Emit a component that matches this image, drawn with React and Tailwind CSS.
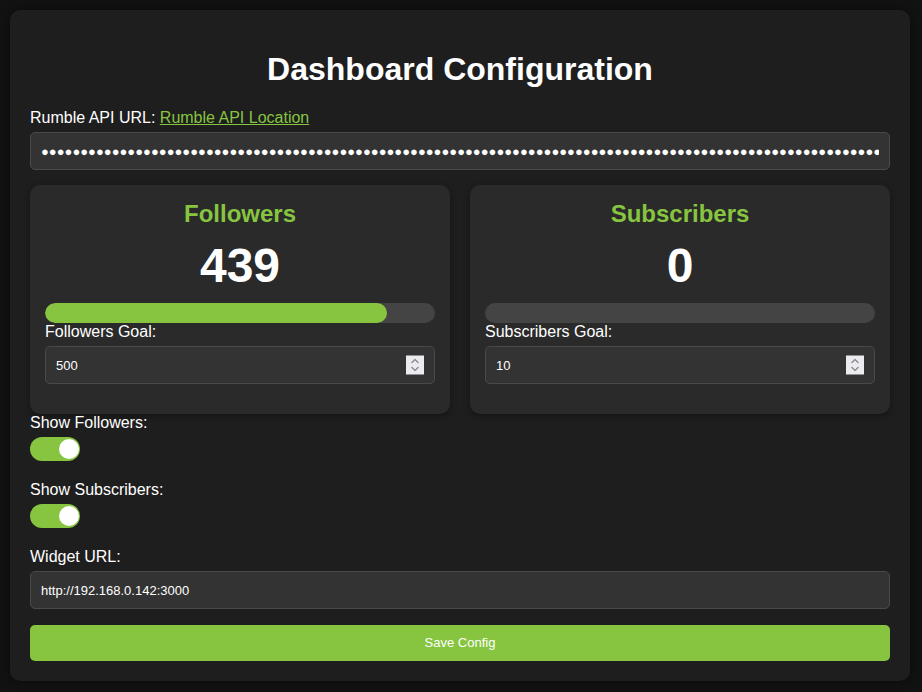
import { useState } from 'react';

const Spinner = () => (
    <div className="pointer-events-none absolute right-[11px] top-1/2 -translate-y-1/2 w-[18px] h-[19px] bg-[#ebebf0] flex flex-col items-center justify-center gap-[3px]">
        <svg width="10" height="5" viewBox="0 0 10 5" fill="none" stroke="#8a8a8f" strokeWidth="1.3">
            <path d="M1.5 4.5 L5 1 L8.5 4.5" />
        </svg>
        <svg width="10" height="5" viewBox="0 0 10 5" fill="none" stroke="#8a8a8f" strokeWidth="1.3">
            <path d="M1.5 0.5 L5 4 L8.5 0.5" />
        </svg>
    </div>
);

const StatCard = ({ title, count, goal, onGoal }) => {
    const pct = goal > 0 ? Math.min(100, (count / goal) * 100) : 0;
    return (
        <div className="bg-[#2a2a2a] rounded-[10px] p-[15px] shadow-[0_2px_6px_rgba(0,0,0,0.35)]">
            <h2 className="text-center text-[24px] leading-[28px] font-bold text-[#87c540] mb-[10px]">{title}</h2>
            <div className="text-center text-[48px] leading-[55px] font-bold text-white my-[10px]">{count}</div>
            <div className="h-[20px] w-full rounded-[10px] bg-[#444] overflow-hidden">
                <div className="h-full rounded-[10px] bg-[#87c540]" style={{ width: `${pct}%` }} />
            </div>
            <label className="block text-[16px] leading-[18px] text-white mb-[5px]">{title} Goal:</label>
            <div className="relative mb-[15px]">
                <input
                    type="number"
                    value={goal}
                    onChange={(e) => onGoal(Number(e.target.value))}
                    className="block w-full h-[38px] px-[10px] text-[13px] text-white bg-[#333] border border-[#4a4a4a] rounded-[5px] outline-none [appearance:textfield] [&::-webkit-inner-spin-button]:appearance-none"
                />
                <Spinner />
            </div>
        </div>
    );
};

const Toggle = ({ on, onClick }) => (
    <button
        onClick={onClick}
        className={`flex items-center w-[50px] h-[24px] rounded-full px-[1px] ${on ? 'justify-end bg-[#87c540]' : 'justify-start bg-[#555]'}`}
    >
        <span className="block w-[20px] h-[20px] rounded-full bg-white" />
    </button>
);

export default function App() {
    const [followersGoal, setFollowersGoal] = useState(500);
    const [subsGoal, setSubsGoal] = useState(10);
    const [showFollowers, setShowFollowers] = useState(true);
    const [showSubs, setShowSubs] = useState(true);

    return (
        <div className="min-h-screen bg-[#121212] p-[10px] font-['Liberation_Sans',Arial,sans-serif]">
            <div className="w-[900px] bg-[#1e1e1e] rounded-[10px] px-[20px] pt-[20px] pb-[20px] shadow-[0_0_10px_rgba(0,0,0,0.5)]">
                <h1 className="text-center text-[32px] leading-[37px] font-bold text-white mt-[21px] mb-[21px]">Dashboard Configuration</h1>

                <label className="block text-[16px] leading-[18px] text-white mb-[5px]">
                    Rumble API URL: <a href="#" className="text-[#87c540] underline">Rumble API Location</a>
                </label>
                {/* masked api key, drawn with the same circles the browser uses */}
                <input
                    type="text"
                    readOnly
                    value={'●'.repeat(140)}
                    className="block w-full h-[38px] px-[10px] mb-[15px] text-[13px] text-white bg-[#333] border border-[#4a4a4a] rounded-[5px] outline-none"
                />

                <div className="grid grid-cols-2 gap-[20px]">
                    <StatCard title="Followers" count={439} goal={followersGoal} onGoal={setFollowersGoal} />
                    <StatCard title="Subscribers" count={0} goal={subsGoal} onGoal={setSubsGoal} />
                </div>

                <label className="block text-[16px] leading-[18px] text-white mb-[5px]">Show Followers:</label>
                <div className="mb-[20px]">
                    <Toggle on={showFollowers} onClick={() => setShowFollowers(!showFollowers)} />
                </div>

                <label className="block text-[16px] leading-[18px] text-white mb-[5px]">Show Subscribers:</label>
                <div className="mb-[20px]">
                    <Toggle on={showSubs} onClick={() => setShowSubs(!showSubs)} />
                </div>

                <label className="block text-[16px] leading-[18px] text-white mb-[5px]">Widget URL:</label>
                <input
                    type="text"
                    readOnly
                    value="http://192.168.0.142:3000"
                    className="block w-full h-[38px] px-[10px] mb-[16px] text-[13px] text-white bg-[#333] border border-[#4a4a4a] rounded-[5px] outline-none"
                />

                <button className="block w-full h-[36px] rounded-[5px] bg-[#87c540] text-white text-[13px]">Save Config</button>
            </div>
        </div>
    );
}
